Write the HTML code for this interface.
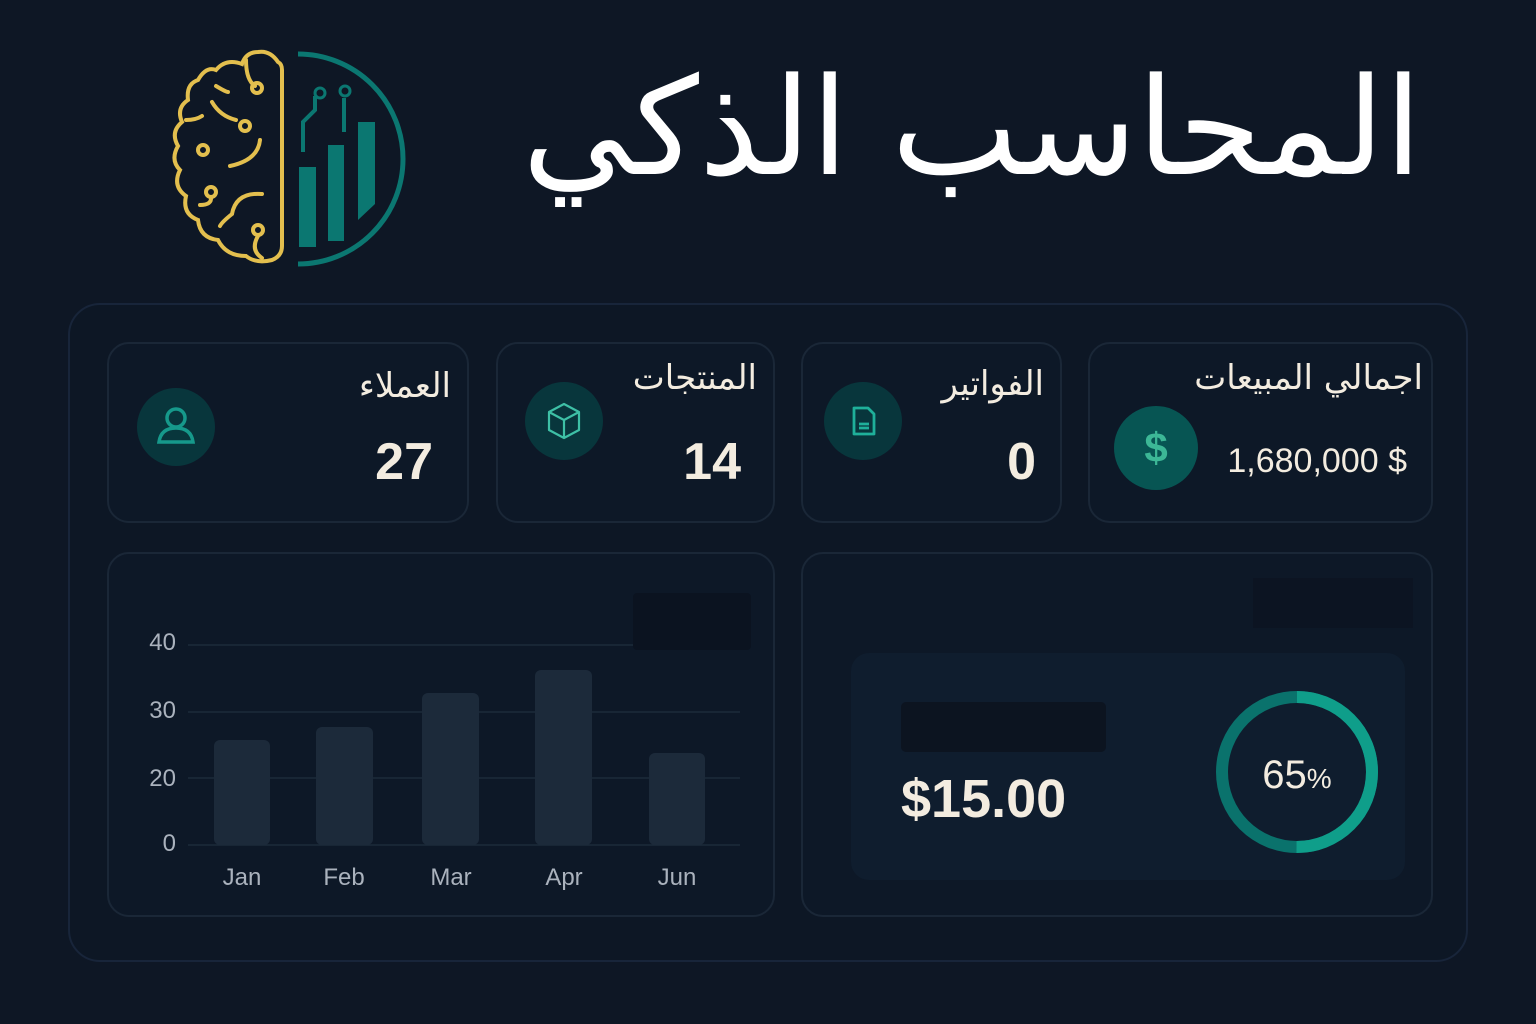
<!DOCTYPE html>
<html><head><meta charset="utf-8"><style>
body{margin:0;width:1536px;height:1024px;background:#0e1725;overflow:hidden;position:relative;font-family:"Liberation Sans",sans-serif;color:#f3ece0}
.a{position:absolute}
.card{position:absolute;background:#0d1827;border:2px solid #1a2737;border-radius:22px;box-sizing:border-box}
.ar{font-family:"DejaVu Sans",sans-serif;direction:rtl;white-space:nowrap}
.ic{position:absolute;border-radius:50%;background:#08363c}
.num{position:absolute;font-weight:bold;font-size:52px;text-align:right}
</style></head><body>
<svg class="a" style="left:160px;top:40px" width="260" height="240" viewBox="160 40 260 240" fill="none">
<g stroke="#e3bf4e" stroke-width="4" stroke-linecap="round">
<path d="M278 62 Q270 50 258 52 Q246 52 242 64 Q226 58 216 70 Q206 66 198 80 Q186 84 188 100 Q176 108 182 122 Q170 132 178 146 Q170 160 180 170 Q172 186 186 196 Q182 214 198 220 Q200 238 218 240 Q226 256 246 256 Q256 264 272 260 Q282 256 282 246 L282 70 Q282 64 278 62Z"/>
<path d="M246 60 Q246 80 255 86"/><circle cx="257" cy="88" r="5"/>
<path d="M212 102 Q220 116 236 120"/><circle cx="245" cy="126" r="5"/>
<path d="M260 140 Q258 160 230 166"/>
<path d="M216 86 Q226 92 228 92"/>
<circle cx="203" cy="150" r="5"/>
<path d="M186 120 Q196 120 202 116"/>
<circle cx="211" cy="192" r="5"/><path d="M200 205 Q212 205 211 197"/>
<path d="M262 194 Q236 192 232 214 Q222 222 220 226"/>
<circle cx="258" cy="230" r="5"/><path d="M258 236 Q250 250 262 258"/>
</g>
<g fill="#0b7771">
<path d="M298 54 A105 105 0 0 1 298 264" stroke="#0b7771" stroke-width="5" fill="none"/>
<rect x="299" y="167" width="17" height="80"/>
<rect x="328" y="145" width="16" height="96"/>
<path d="M358 122 h17 v82 l-17 16z"/>
<path d="M303 152 v-30 l12 -12 v-14" stroke="#0b7771" stroke-width="4" fill="none"/><circle cx="320" cy="93" r="5" stroke="#0b7771" stroke-width="3" fill="none"/>
<path d="M344 132 v-34" stroke="#0b7771" stroke-width="4"/><circle cx="345" cy="91" r="5" stroke="#0b7771" stroke-width="3" fill="none"/>
</g></svg>
<div class="a ar" style="right:114px;top:28px;font-size:135px;line-height:200px;color:#fff">المحاسب الذكي</div>

<div class="a" style="left:68px;top:303px;width:1400px;height:659px;border:2px solid #18253a;border-radius:32px;box-sizing:border-box;background:#0d1725"></div>

<div class="card" style="left:107px;top:342px;width:362px;height:181px">
<div class="a ar" style="right:16px;top:22px;font-size:34px">العملاء</div>
<div class="ic" style="left:28px;top:44px;width:78px;height:78px"><svg width="78" height="78" viewBox="0 0 78 78" fill="none" stroke="#16998b" stroke-width="3.5"><circle cx="39" cy="30" r="9"/><path d="M22 54 Q24 40 39 40 Q54 40 56 54 Z"/></svg></div>
<div class="num" style="right:34px;top:88px">27</div></div>

<div class="card" style="left:496px;top:342px;width:279px;height:181px">
<div class="a ar" style="right:16px;top:14px;font-size:34px">المنتجات</div>
<div class="ic" style="left:27px;top:38px;width:78px;height:78px"><svg width="78" height="78" viewBox="0 0 78 78" fill="none" stroke="#3ec0a6" stroke-width="2.2" stroke-linejoin="round"><path d="M39 22 L54 30 V48 L39 56 L24 48 V30Z M24 30 L39 38 L54 30 M39 38 V56"/></svg></div>
<div class="num" style="right:32px;top:88px">14</div></div>

<div class="card" style="left:801px;top:342px;width:261px;height:181px">
<div class="a ar" style="right:16px;top:20px;font-size:34px">الفواتير</div>
<div class="ic" style="left:21px;top:38px;width:78px;height:78px"><svg width="78" height="78" viewBox="0 0 78 78" fill="none" stroke="#1fb09a" stroke-width="2.8" stroke-linejoin="round"><path d="M30 26 H44 L50 32 V52 H30Z M35 42 H45 M35 46 H45"/></svg></div>
<div class="num" style="right:24px;top:88px">0</div></div>

<div class="card" style="left:1088px;top:342px;width:345px;height:181px">
<div class="a ar" style="right:8px;top:14px;font-size:34px">اجمالي المبيعات</div>
<div class="ic" style="left:24px;top:62px;width:84px;height:84px;background:#075553"><div style="font-size:42px;font-weight:bold;color:#3cb796;text-align:center;line-height:84px">$</div></div>
<div class="a" style="right:24px;top:98px;font-size:34px">1,680,000 $</div></div>

<div class="card" style="left:107px;top:552px;width:668px;height:365px"></div>
<div class="a" style="left:633px;top:593px;width:118px;height:57px;background:#0b1320;border-radius:4px"></div>
<svg class="a" style="left:107px;top:552px" width="668" height="365">
<g stroke="#1d2a3a" stroke-width="1.5"><line x1="81" y1="93" x2="526" y2="93"/><line x1="81" y1="160" x2="633" y2="160"/><line x1="81" y1="226" x2="633" y2="226"/><line x1="81" y1="293" x2="633" y2="293"/></g>
<g fill="#1c2a3a"><rect x="107" y="188" width="56" height="105" rx="6"/><rect x="209" y="175" width="57" height="118" rx="6"/><rect x="315" y="141" width="57" height="152" rx="6"/><rect x="428" y="118" width="57" height="175" rx="6"/><rect x="542" y="201" width="56" height="92" rx="6"/></g>
<g fill="#aab2bd" font-family="Liberation Sans" font-size="24" text-anchor="end"><text x="69" y="98">40</text><text x="69" y="166">30</text><text x="69" y="234">20</text><text x="69" y="299">0</text></g>
<g fill="#aab2bd" font-family="Liberation Sans" font-size="24" text-anchor="middle"><text x="135" y="333">Jan</text><text x="237" y="333">Feb</text><text x="344" y="333">Mar</text><text x="457" y="333">Apr</text><text x="570" y="333">Jun</text></g>
</svg>

<div class="card" style="left:801px;top:552px;width:632px;height:365px"></div>
<div class="a" style="left:1253px;top:578px;width:160px;height:50px;background:#0c1422"></div>
<div class="a" style="left:851px;top:653px;width:554px;height:227px;background:#0f1d2e;border-radius:18px"></div>
<div class="a" style="left:901px;top:702px;width:205px;height:50px;background:#0c1420;border-radius:5px"></div>
<div class="a" style="left:901px;top:768px;font-size:54px;font-weight:bold">$15.00</div>
<svg class="a" style="left:1211px;top:686px" width="172" height="172"><circle cx="86" cy="86" r="75" fill="none" stroke="#0a726c" stroke-width="12"/><circle cx="86" cy="86" r="75" fill="none" stroke="#0f9e8a" stroke-width="12" stroke-dasharray="236 500" transform="rotate(-90 86 86)"/>
<text x="86" y="102" text-anchor="middle" fill="#f3ece0" font-family="Liberation Sans" font-size="40">65<tspan font-size="28">%</tspan></text></svg>
</body></html>
